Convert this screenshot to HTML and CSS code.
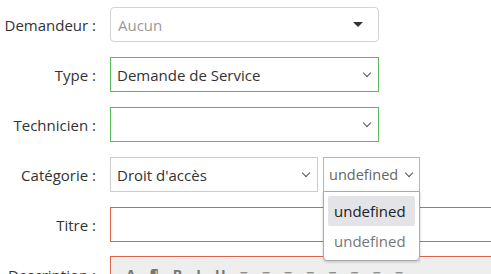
FILE: index.html
```html
<!DOCTYPE html>
<html lang="fr">
<head>
  <meta charset="UTF-8" />
  <meta name="viewport" content="width=device-width, initial-scale=1.0" />
  <title>Nouveau ticket</title>
  <link rel="stylesheet" href="styles.css">
</head>
<body>
  <form class="ticket">
    <div class="row">
      <label>Demandeur :</label>
      <div class="field chosen">
        <span class="placeholder">Aucun</span>
        <span class="caret"></span>
      </div>
    </div>

    <div class="row">
      <label>Type :</label>
      <div class="field select ok">
        <span>Demande de Service</span>
        <span class="chev"></span>
      </div>
    </div>

    <div class="row">
      <label>Technicien :</label>
      <div class="field select ok">
        <span></span>
        <span class="chev"></span>
      </div>
    </div>

    <div class="row">
      <label>Catégorie :</label>
      <div class="pair">
        <div class="field select cat">
          <span>Droit d'accès</span>
          <span class="chev"></span>
        </div>
        <div class="sub">
          <div class="field select warn">
            <span>undefined</span>
            <span class="chev"></span>
          </div>
          <ul class="menu">
            <li class="active">undefined</li>
            <li>undefined</li>
          </ul>
        </div>
      </div>
    </div>

    <div class="row">
      <label>Titre :</label>
      <div class="field wide error"></div>
    </div>

    <div class="row">
      <label>Description :</label>
      <div class="editor error">
        <div class="toolbar">
          <span>A</span><span>¶</span><span>B</span><span>I</span><span>U</span>
          <span>≡</span><span>≡</span><span>≡</span><span>≡</span><span>≡</span>
          <span>≡</span><span>≡</span><span>≡</span>
        </div>
      </div>
    </div>
  </form>
</body>
</html>
```

FILE: styles.css
```css
body {
  margin: 0;
  font-family: "Open Sans", sans-serif;
  font-size: 15px;
  color: #333;
  background: #fff;
  overflow: hidden;
}
.ticket {
  padding-top: 7px;
}
.row {
  display: flex;
  align-items: center;
  gap: 14px;
  margin-bottom: 15px;
  height: 35px;
}
.row label {
  width: 96px;
  text-align: right;
  flex: none;
  color: #333;
}
.field {
  box-sizing: border-box;
  height: 35px;
  width: 269px;
  border: 1px solid #ccc;
  display: flex;
  align-items: center;
  justify-content: space-between;
  padding: 0 6px;
  background: #fff;
  flex: none;
}
.chosen {
  border-radius: 4px;
  border-color: #d2d2d8;
  padding: 0 15px 0 7px;
}
.placeholder {
  color: #999;
}
.caret {
  width: 0;
  height: 0;
  border-left: 5px solid transparent;
  border-right: 5px solid transparent;
  border-top: 5px solid #333;
}
.chev {
  width: 5px;
  height: 5px;
  border-right: 1.3px solid #555;
  border-bottom: 1.3px solid #555;
  transform: rotate(45deg);
  margin: -4px 2px 0 0;
}
.ok {
  border-color: #5cb85c;
}
.pair {
  display: flex;
  gap: 5px;
}
.cat {
  width: 208px;
}
.sub {
  position: relative;
}
.warn {
  width: 97px;
  border-color: #f0ad4e;
  color: #666;
  font-size: 14.5px;
  padding: 0 5px 0 5px;
}
.menu {
  position: absolute;
  top: 34px;
  left: 0;
  width: 97px;
  box-sizing: border-box;
  margin: 0;
  padding: 4px 4px;
  list-style: none;
  background: #fff;
  border: 1px solid #aaa;
  border-radius: 0 0 4px 4px;
  box-shadow: 0 1px 3px rgba(0, 0, 0, 0.2);
  z-index: 2;
}
.menu li {
  height: 30px;
  line-height: 31px;
  padding-left: 6px;
  border-radius: 2px;
  color: #777;
}
.menu li.active {
  background: #e4e4e8;
  color: #222;
}
.wide {
  width: 420px;
}
.error {
  border-color: #e0604a;
}
.editor {
  box-sizing: border-box;
  width: 420px;
  border: 1px solid #e0604a;
  align-self: flex-start;
  height: 60px;
  flex: none;
  margin-top: -1px;
}
.toolbar {
  margin: 1px;
  background: #eee;
  height: 30px;
  display: flex;
  gap: 14px;
  padding: 7px 14px 0;
  color: #777;
  font-size: 14px;
  font-weight: bold;
}
```
